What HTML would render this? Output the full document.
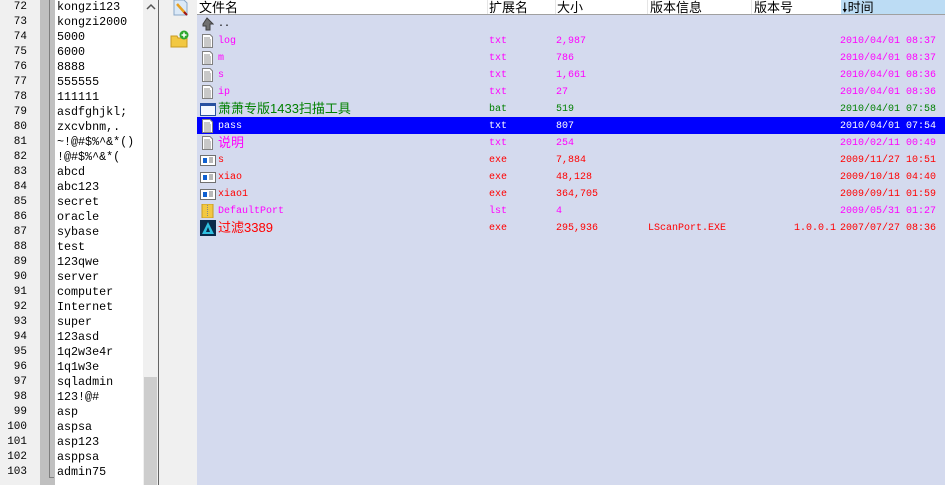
<!DOCTYPE html>
<html><head><meta charset="utf-8"><style>
*{margin:0;padding:0;box-sizing:border-box}
body{width:945px;height:485px;overflow:hidden;background:#f0f0f0;position:relative;font-family:"Liberation Mono","Noto Sans CJK SC",monospace}
.gut{position:absolute;left:0;top:0;width:40px;height:485px;background:#f0f0f0}
.strip{position:absolute;left:40px;top:0;width:15px;height:485px;background:#c0c0c0}
.fold{position:absolute;left:49px;top:0;width:1px;height:478px;background:#808080}
.fold2{position:absolute;left:49px;top:477px;width:5px;height:1px;background:#808080}
.ed{position:absolute;left:55px;top:0;width:88px;height:485px;background:#fff}
.sb{position:absolute;left:143px;top:0;width:15px;height:485px;background:#f0f0f0}
.thumb{position:absolute;left:144px;top:377px;width:13px;height:108px;background:#cdcdcd}
.vl{position:absolute;left:158px;top:0;width:1px;height:485px;background:#646464}
.ln{position:absolute;left:0;width:27px;font-size:11px;color:#000;line-height:15px;text-align:right}
.tx{position:absolute;left:57px;font-size:11.7px;line-height:15px;color:#000;white-space:pre}
.list{position:absolute;left:197px;top:0;width:748px;height:485px;background:#d4daee}
.hdr{position:absolute;left:197px;top:0;width:748px;height:15px;background:#fff;border-bottom:1px solid #a0a0a0}
.h{position:absolute;top:0;font-size:13px;line-height:15px;color:#000;font-family:"Liberation Sans","Noto Sans CJK SC",sans-serif}
.hs{position:absolute;top:0;width:1px;height:14px;background:#e5e5e5}
.row{position:absolute;left:197px;width:748px;height:17px;font-size:10px;line-height:17px;white-space:pre}
.row span{position:absolute;top:1px}
.cj{font-family:"Liberation Sans","Noto Sans CJK SC",sans-serif;font-size:13px}
.row span.cj{top:0}
.sel{background:#0000ff;color:#fff!important}
.p{color:#ff00ff}.g{color:#008000}.r{color:#ff0000}.w{color:#fff}
.ic{position:absolute;left:4px;top:2px;width:13px;height:14px}
</style></head><body>
<div class="gut"></div><div class="strip"></div><div class="fold"></div><div class="fold2"></div>
<div class="ed"></div><div class="sb"></div><div class="thumb"></div><div class="vl"></div>
<svg style="position:absolute;left:146px;top:3px" width="10" height="8"><path d="M1 6 L5 2 L9 6" fill="none" stroke="#555" stroke-width="1.5"/></svg>
<div class="ln" style="top:0">72<br>73<br>74<br>75<br>76<br>77<br>78<br>79<br>80<br>81<br>82<br>83<br>84<br>85<br>86<br>87<br>88<br>89<br>90<br>91<br>92<br>93<br>94<br>95<br>96<br>97<br>98<br>99<br>100<br>101<br>102<br>103</div>
<div class="tx" style="top:0">kongzi123
kongzi2000
5000
6000
8888
555555
111111
asdfghjkl;
zxcvbnm,.
~!@#$%^&amp;*()
!@#$%^&amp;*(
abcd
abc123
secret
oracle
sybase
test
123qwe
server
computer
Internet
super
123asd
1q2w3e4r
1q1w3e
sqladmin
123!@#
asp
aspsa
asp123
asppsa
admin75</div>
<svg style="position:absolute;left:172px;top:0" width="18" height="16"><path d="M2 0 H12 L15 3 V15 H2 Z" fill="#dbe9f7" stroke="#8aa8c8"/><path d="M5 4 L13 13" stroke="#e8a020" stroke-width="2.5"/><path d="M12 12 L15 15" stroke="#a01010" stroke-width="2"/></svg>
<svg style="position:absolute;left:170px;top:30px" width="20" height="18"><path d="M1 6 H7 L8 8 H17 V17 H1 Z" fill="#f2c842" stroke="#c89a20"/><circle cx="14" cy="5" r="4.5" fill="#2ea82e"/><path d="M14 2.5 V7.5 M11.5 5 H16.5" stroke="#fff" stroke-width="1.5"/></svg>
<div class="list"></div>
<div class="hdr"></div>
<div style="position:absolute;left:841px;top:0;width:104px;height:14px;background:#bcdcf4"></div>
<div class="h" style="left:199px">文件名</div>
<div class="hs" style="left:487px"></div><div class="h" style="left:489px">扩展名</div>
<div class="hs" style="left:555px"></div><div class="h" style="left:557px">大小</div>
<div class="hs" style="left:647px"></div><div class="h" style="left:650px">版本信息</div>
<div class="hs" style="left:751px"></div><div class="h" style="left:754px">版本号</div>
<div class="h" style="left:842px">🠗时间</div>

<div class="row" style="top:15px"><svg class="ic" viewBox="0 0 13 14"><path d="M6 1 L12 7 H9 V13 H5 V9 H2 V7 Z" fill="#707070" stroke="#404040"/></svg><span style="left:21px">..</span></div>

<div class="row p" style="top:32px"><svg class="ic" viewBox="0 0 13 14"><path d="M1.5 .5 H9 L11.5 3 V13.5 H1.5 Z" fill="#fff" stroke="#808080"/><path d="M3 4h6M3 6h7M3 8h7M3 10h7M3 12h7" stroke="#909090"/></svg><span style="left:21px">log</span><span style="left:292px">txt</span><span style="left:359px">2,987</span><span style="left:643px">2010/04/01 08:37</span></div>
<div class="row p" style="top:49px"><svg class="ic" viewBox="0 0 13 14"><path d="M1.5 .5 H9 L11.5 3 V13.5 H1.5 Z" fill="#fff" stroke="#808080"/><path d="M3 4h6M3 6h7M3 8h7M3 10h7M3 12h7" stroke="#909090"/></svg><span style="left:21px">m</span><span style="left:292px">txt</span><span style="left:359px">786</span><span style="left:643px">2010/04/01 08:37</span></div>
<div class="row p" style="top:66px"><svg class="ic" viewBox="0 0 13 14"><path d="M1.5 .5 H9 L11.5 3 V13.5 H1.5 Z" fill="#fff" stroke="#808080"/><path d="M3 4h6M3 6h7M3 8h7M3 10h7M3 12h7" stroke="#909090"/></svg><span style="left:21px">s</span><span style="left:292px">txt</span><span style="left:359px">1,661</span><span style="left:643px">2010/04/01 08:36</span></div>
<div class="row p" style="top:83px"><svg class="ic" viewBox="0 0 13 14"><path d="M1.5 .5 H9 L11.5 3 V13.5 H1.5 Z" fill="#fff" stroke="#808080"/><path d="M3 4h6M3 6h7M3 8h7M3 10h7M3 12h7" stroke="#909090"/></svg><span style="left:21px">ip</span><span style="left:292px">txt</span><span style="left:359px">27</span><span style="left:643px">2010/04/01 08:36</span></div>
<div class="row g" style="top:100px"><svg class="ic" style="left:3px;width:16px" viewBox="0 0 16 14"><rect x=".5" y="1.5" width="15" height="12" fill="#f4f8ff" stroke="#2850a0"/><rect x="1" y="2" width="14" height="2" fill="#2850a0"/></svg><span class="cj" style="left:21px">萧萧专版1433扫描工具</span><span style="left:292px">bat</span><span style="left:359px">519</span><span style="left:643px">2010/04/01 07:58</span></div>
<div class="row sel" style="top:117px"><svg class="ic" viewBox="0 0 13 14"><path d="M1.5 .5 H9 L11.5 3 V13.5 H1.5 Z" fill="#fff" stroke="#808080"/><path d="M3 4h6M3 6h7M3 8h7M3 10h7M3 12h7" stroke="#909090"/></svg><span style="left:21px">pass</span><span style="left:292px">txt</span><span style="left:359px">807</span><span style="left:643px">2010/04/01 07:54</span></div>
<div class="row p" style="top:134px"><svg class="ic" viewBox="0 0 13 14"><path d="M1.5 .5 H9 L11.5 3 V13.5 H1.5 Z" fill="#fff" stroke="#808080"/><path d="M3 4h6M3 6h7M3 8h7M3 10h7M3 12h7" stroke="#909090"/></svg><span class="cj" style="left:21px">说明</span><span style="left:292px">txt</span><span style="left:359px">254</span><span style="left:643px">2010/02/11 00:49</span></div>
<div class="row r" style="top:151px"><svg class="ic" style="left:3px;width:16px" viewBox="0 0 16 14"><rect x=".5" y="2.5" width="15" height="10" fill="#fff" stroke="#707070"/><rect x="3" y="5" width="4" height="5" fill="#1060d0"/><path d="M9 5h4M9 7h4M9 9h4" stroke="#707070"/></svg><span style="left:21px">s</span><span style="left:292px">exe</span><span style="left:359px">7,884</span><span style="left:643px">2009/11/27 10:51</span></div>
<div class="row r" style="top:168px"><svg class="ic" style="left:3px;width:16px" viewBox="0 0 16 14"><rect x=".5" y="2.5" width="15" height="10" fill="#fff" stroke="#707070"/><rect x="3" y="5" width="4" height="5" fill="#1060d0"/><path d="M9 5h4M9 7h4M9 9h4" stroke="#707070"/></svg><span style="left:21px">xiao</span><span style="left:292px">exe</span><span style="left:359px">48,128</span><span style="left:643px">2009/10/18 04:40</span></div>
<div class="row r" style="top:185px"><svg class="ic" style="left:3px;width:16px" viewBox="0 0 16 14"><rect x=".5" y="2.5" width="15" height="10" fill="#fff" stroke="#707070"/><rect x="3" y="5" width="4" height="5" fill="#1060d0"/><path d="M9 5h4M9 7h4M9 9h4" stroke="#707070"/></svg><span style="left:21px">xiao1</span><span style="left:292px">exe</span><span style="left:359px">364,705</span><span style="left:643px">2009/09/11 01:59</span></div>
<div class="row p" style="top:202px"><svg class="ic" viewBox="0 0 13 14"><rect x="1" y="0" width="11" height="14" fill="#f2c842" stroke="#c89a20"/><path d="M6.5 1v12" stroke="#888" stroke-dasharray="1 1"/></svg><span style="left:21px">DefaultPort</span><span style="left:292px">lst</span><span style="left:359px">4</span><span style="left:643px">2009/05/31 01:27</span></div>
<div class="row r" style="top:219px"><svg class="ic" style="left:3px;top:1px;width:16px;height:16px" viewBox="0 0 16 16"><rect width="16" height="16" fill="#0a2a4a"/><path d="M8 2 L14 14 H2 Z" fill="#30c0e0"/><path d="M8 7 L10 12 H6 Z" fill="#0a2a4a"/></svg><span class="cj" style="left:21px">过滤3389</span><span style="left:292px">exe</span><span style="left:359px">295,936</span><span style="left:451px">LScanPort.EXE</span><span style="left:597px">1.0.0.1</span><span style="left:643px">2007/07/27 08:36</span></div>
</body></html>
